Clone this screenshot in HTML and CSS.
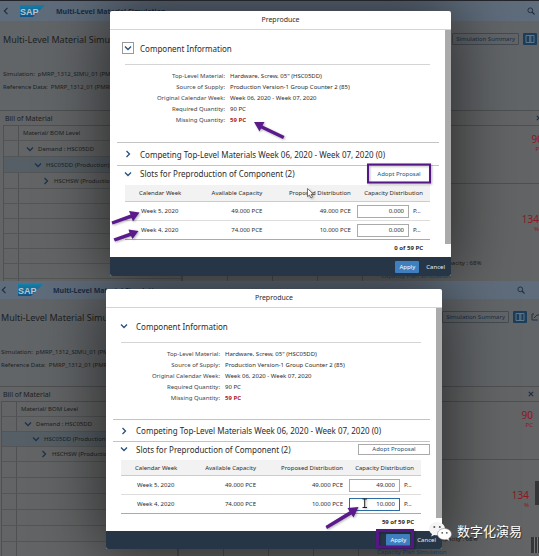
FILE: index.html
```html
<!DOCTYPE html>
<html lang="en">
<head>
  <meta charset="UTF-8" />
  <meta name="viewport" content="width=device-width, initial-scale=1" />
  <title>Preproduce - Multi-Level Material Simulation</title>
  <link rel="stylesheet" href="styles.css">
</head>
<body>
  <!-- Shared icons -->
  <svg class="sprite" aria-hidden="true">
    <linearGradient id="sapFill" x2="0" y2="1"><stop offset="0" stop-color="#147fa8"/><stop offset="1" stop-color="#125385"/></linearGradient>
    <symbol id="down" viewBox="0 0 8 8"><path d="M1 2.5 4 5.5 7 2.5" fill="none" stroke="currentColor" stroke-width="1.3"/></symbol>
    <symbol id="right" viewBox="0 0 8 8"><path d="M2.5 1 5.5 4 2.5 7" fill="none" stroke="currentColor" stroke-width="1.3"/></symbol>
    <symbol id="left" viewBox="0 0 8 8"><path d="M5.5 .8 2.3 4 5.5 7.2" fill="none" stroke="currentColor" stroke-width="1.1"/></symbol>
    <symbol id="search" viewBox="0 0 8 8"><circle cx="3.3" cy="3.3" r="2.4" fill="none" stroke="currentColor" stroke-width=".9"/><path d="M5 5 7.5 7.5" stroke="currentColor" stroke-width="1.1"/></symbol>
    <symbol id="close" viewBox="0 0 8 8"><path d="M1.8 1.8 6.2 6.2M6.2 1.8 1.8 6.2" stroke="currentColor" stroke-width="1.1"/></symbol>
    <symbol id="columns" viewBox="0 0 10 8"><path d="M1 .5h8v7H1z" fill="none" stroke="currentColor" stroke-width=".8"/><path d="M4 .5h2.500v7H4z" fill="currentColor" opacity=".6"/></symbol>
    <symbol id="share" viewBox="0 0 8 8"><path d="M3 1H1v6h6M3 5l3-3h2" fill="none" stroke="currentColor" stroke-width=".9"/></symbol>
  </svg>

  <section class="screen">
    <header class="shell">
      <button class="icon-btn" aria-label="Back"><svg class="icon"><use href="#left"/></svg></button>
      <svg class="logo" viewBox="0 0 25 12" role="img" aria-label="SAP"><path d="M0 0H25L13 12H0z" fill="url(#sapFill)"/><text x="0" y="9.500">SAP</text></svg>
      <span class="shell-title">Multi-Level Material Simulation <i class="caret"></i></span>
      <button class="icon-btn search" aria-label="Search"><svg class="icon"><use href="#search"/></svg></button>
    </header>
    <div class="page-head">
      <div class="title-row">
        <h1>Multi-Level Material Simulation</h1>
        <button class="summary">Simulation Summary</button>
        <button class="layout" aria-label="Layout"><svg><use href="#columns"/></svg></button>
      </div>
      <p>Simulation: &nbsp;pMRP_1312_SIMU_01 (PMRP)</p>
      <p>Reference Data: &nbsp;PMRP_1312_01 (PMRP)</p>
    </div>
    <div class="bom-bar">
      <h2>Bill of Material</h2>
      <button class="icon-btn" aria-label="Close"><svg class="icon"><use href="#close"/></svg></button>
    </div>
    <div class="workspace">
      <div class="tree">
        <div class="tree-row head">Material/ BOM Level</div>
        <div class="tree-row level1"><svg class="icon"><use href="#down"/></svg>Demand : HSC05DD</div>
        <div class="tree-row level2 selected"><svg class="icon"><use href="#down"/></svg>HSC05DD (Production)</div>
        <div class="tree-row level3"><svg class="icon"><use href="#right"/></svg>HSCHSW (Production)</div>
        <div class="tree-row"></div>
        <div class="tree-row"></div>
        <div class="tree-row"></div>
        <div class="tree-row"></div>
        <div class="tree-row"></div>
        <div class="tree-row"></div>
      </div>
      <div class="board">
        <div class="kpi first"><strong>90</strong><small>PC</small></div>
        <div class="kpi second"><strong>134</strong><small>%</small></div>
        <p class="capacity">Capacity : 68%</p>
        <a class="plan" href="#">Capacity Plan Simulation</a>
      </div>
    </div>

    <div class="dialog" role="dialog" aria-labelledby="title1">
      <h2 class="dialog-title" id="title1">Preproduce</h2>
      <div class="dialog-body">
        <div class="content">
          <h3 class="info-head"><button class="toggle focused" aria-label="Collapse component information"><svg class="icon"><use href="#down"/></svg></button>Component Information</h3>
          <dl class="fields">
            <dt>Top-Level Material:</dt><dd>Hardware, Screw, 05" (HSC05DD)</dd>
            <dt>Source of Supply:</dt><dd>Production Version-1 Group Counter 2 (85)</dd>
            <dt>Original Calendar Week:</dt><dd>Week 06, 2020 - Week 07, 2020</dd>
            <dt>Required Quantity:</dt><dd>90 PC</dd>
            <dt>Missing Quantity:</dt><dd class="missing">59 PC</dd>
          </dl>
          <h3 class="competing"><button class="toggle" aria-label="Expand competing materials"><svg class="icon"><use href="#right"/></svg></button>Competing Top-Level Materials Week 06, 2020 - Week 07, 2020 (0)</h3>
          <div class="slots-head">
            <h3><button class="toggle" aria-label="Collapse slots"><svg class="icon"><use href="#down"/></svg></button>Slots for Preproduction of Component (2)</h3>
            <button class="adopt marked">Adopt Proposal</button>
          </div>
          <table class="slots">
            <thead>
              <tr><th>Calendar Week</th><th>Available Capacity</th><th>Proposed Distribution</th><th>Capacity Distribution</th></tr>
            </thead>
            <tbody>
              <tr><td>Week 5, 2020</td><td>49.000 PCE</td><td>49.000 PCE</td><td><label><input type="text" value="0.000" aria-label="Week 5 distribution"><span>P...</span></label></td></tr>
              <tr><td>Week 4, 2020</td><td>74.000 PCE</td><td>10.000 PCE</td><td><label><input type="text" value="0.000" aria-label="Week 4 distribution"><span>P...</span></label></td></tr>
            </tbody>
          </table>
          <p class="total">0 of 59 PC</p>
        </div>
        <div class="scrollbar"></div>
      </div>
      <footer class="dialog-foot">
        <button class="apply">Apply</button>
        <button class="cancel">Cancel</button>
      </footer>
    </div>
  </section>

  <section class="screen compact">
    <header class="shell">
      <button class="icon-btn" aria-label="Back"><svg class="icon"><use href="#left"/></svg></button>
      <svg class="logo" viewBox="0 0 25 12" role="img" aria-label="SAP"><path d="M0 0H25L13 12H0z" fill="url(#sapFill)"/><text x="0" y="9.500">SAP</text></svg>
      <span class="shell-title">Multi-Level Material Simulation <i class="caret"></i></span>
      <button class="icon-btn search" aria-label="Search"><svg class="icon"><use href="#search"/></svg></button>
    </header>
    <div class="page-head">
      <div class="title-row">
        <h1>Multi-Level Material Simulation</h1>
        <button class="summary">Simulation Summary</button>
        <button class="layout" aria-label="Layout"><svg><use href="#columns"/></svg></button>
        <button class="icon-btn share" aria-label="Share"><svg class="icon"><use href="#share"/></svg></button>
      </div>
      <p>Simulation: &nbsp;pMRP_1312_SIMU_01 (PMRP)</p>
      <p>Reference Data: &nbsp;PMRP_1312_01 (PMRP)</p>
    </div>
    <div class="bom-bar">
      <h2>Bill of Material</h2>
      <button class="icon-btn" aria-label="Close"><svg class="icon"><use href="#close"/></svg></button>
    </div>
    <div class="workspace">
      <div class="tree">
        <div class="tree-row head">Material/ BOM Level</div>
        <div class="tree-row level1"><svg class="icon"><use href="#down"/></svg>Demand : HSC05DD</div>
        <div class="tree-row level2 selected"><svg class="icon"><use href="#down"/></svg>HSC05DD (Production)</div>
        <div class="tree-row level3"><svg class="icon"><use href="#right"/></svg>HSCHSW (Production)</div>
        <div class="tree-row"></div>
        <div class="tree-row"></div>
        <div class="tree-row"></div>
        <div class="tree-row"></div>
        <div class="tree-row"></div>
        <div class="tree-row"></div>
      </div>
      <div class="board">
        <div class="kpi first"><strong>90</strong><small>PC</small></div>
        <div class="kpi second"><strong>134</strong><small>%</small></div>
        <p class="capacity">Capacity : 68%</p>
        <a class="plan" href="#">Capacity Plan Simulation</a>
      </div>
    </div>
    <div class="side-handle"></div>
    <div class="pause"></div>

    <div class="dialog" role="dialog" aria-labelledby="title2">
      <h2 class="dialog-title" id="title2">Preproduce</h2>
      <div class="dialog-body">
        <div class="content">
          <h3 class="info-head"><button class="toggle" aria-label="Collapse component information"><svg class="icon"><use href="#down"/></svg></button>Component Information</h3>
          <dl class="fields">
            <dt>Top-Level Material:</dt><dd>Hardware, Screw, 05" (HSC05DD)</dd>
            <dt>Source of Supply:</dt><dd>Production Version-1 Group Counter 2 (85)</dd>
            <dt>Original Calendar Week:</dt><dd>Week 06, 2020 - Week 07, 2020</dd>
            <dt>Required Quantity:</dt><dd>90 PC</dd>
            <dt>Missing Quantity:</dt><dd class="missing">59 PC</dd>
          </dl>
          <h3 class="competing"><button class="toggle" aria-label="Expand competing materials"><svg class="icon"><use href="#right"/></svg></button>Competing Top-Level Materials Week 06, 2020 - Week 07, 2020 (0)</h3>
          <div class="slots-head">
            <h3><button class="toggle" aria-label="Collapse slots"><svg class="icon"><use href="#down"/></svg></button>Slots for Preproduction of Component (2)</h3>
            <button class="adopt">Adopt Proposal</button>
          </div>
          <table class="slots">
            <thead>
              <tr><th>Calendar Week</th><th>Available Capacity</th><th>Proposed Distribution</th><th>Capacity Distribution</th></tr>
            </thead>
            <tbody>
              <tr><td>Week 5, 2020</td><td>49.000 PCE</td><td>49.000 PCE</td><td><label><input type="text" value="49.000" aria-label="Week 5 distribution"><span>P...</span></label></td></tr>
              <tr><td>Week 4, 2020</td><td>74.000 PCE</td><td>10.000 PCE</td><td><label><input class="active" type="text" value="10.000" aria-label="Week 4 distribution"><span>P...</span></label></td></tr>
            </tbody>
          </table>
          <p class="total">59 of 59 PC</p>
        </div>
        <div class="scrollbar"></div>
      </div>
      <footer class="dialog-foot">
        <button class="apply">Apply</button>
        <button class="cancel">Cancel</button>
      </footer>
    </div>
  </section>

  <!-- Arrows, frames and pointers drawn over both screens -->
  <svg class="marks" width="539" height="556" viewBox="0 0 539 556" aria-hidden="true">
    <g fill="#5b1a8b">
      <path d="M254 122 264.5 122 262.5 125.5 284.5 136 283 139 261 128.5 259.5 131.5z"/>
      <path d="M139.500 212.500 129 211 130.500 214.500 111.500 221.500 112.500 224.500 131.500 218 133 221.500z"/>
      <path d="M138.500 231 128.500 229.500 129.500 232.700 113.500 238.500 115 241.500 131 236 132.500 239z"/>
      <path d="M358.500 507 347.500 508 349.500 511.200 325.500 526 327 529 351.500 514.500 353.500 517.500z"/>
    </g>
    <g fill="none" stroke="#551785" stroke-width="2">
      <path d="M368 164.500H430V182.500H368z"/>
      <path d="M377.500 530.500H412.500V547H377.500z" stroke-width="3"/>
    </g>
    <path d="M307.500 188.500v8l2-1.500 1.500 3 1.500-1-1.500-2.700h2.500z" fill="#fff" stroke="#444" stroke-width=".7"/>
    <path d="M362.500 499h4.500M362.500 507.500h4.500M364.700 499v8.500" stroke="#222" stroke-width="1"/>
  </svg>

  <div class="watermark">
    <svg viewBox="0 0 23 19" aria-hidden="true">
      <path d="M8 0C3.500 0 0 3 0 6.700c0 2.200 1.200 4 3 5.200l-.8 2.600 3-1.600c.9.300 1.800.4 2.800.4 4.500 0 8-3 8-6.600S12.500 0 8 0z" fill="#f4f4f4"/>
      <circle cx="5.300" cy="5" r="1" fill="#555"/><circle cx="10.800" cy="5" r="1" fill="#555"/>
      <path d="M15.500 6.500c-3.900 0-7 2.500-7 5.600s3.100 5.600 7 5.600c.8 0 1.600-.1 2.300-.3l2.500 1.300-.6-2.200c1.800-1 2.800-2.600 2.800-4.400 0-3.100-3.100-5.600-7-5.600z" fill="#fff" stroke="#777" stroke-width=".5"/>
      <circle cx="13.200" cy="10.800" r=".9" fill="#555"/><circle cx="17.800" cy="10.800" r=".9" fill="#555"/>
    </svg>
    <span lang="zh">数字化演易</span>
  </div>
</body>
</html>
```
FILE: styles.css
```css
* {
  box-sizing: border-box;
}

body {
  margin: 0;
  position: relative;
  background: #4c4e50;
  font-family: "Noto Sans", "Open Sans", sans-serif;
  font-size: 6px;
  color: #2c2c2c;
}

h1, h2, h3, p, dl, dd {
  margin: 0;
  font-weight: 400;
}

button, input {
  font: inherit;
  color: inherit;
  padding: 0;
  margin: 0;
}

button {
  border: none;
  background: none;
  cursor: pointer;
}

.sprite {
  position: absolute;
  width: 0;
  height: 0;
}

.icon {
  display: block;
  flex: none;
  width: 8px;
  height: 8px;
}

.icon-btn {
  color: #1c2d42;
}

/* Background application */
.screen {
  position: relative;
  overflow: hidden;
  height: 281px;
  background: #636465;
  color: #1c1f22;
  border-top: 1px solid #22242a;
}

.shell {
  display: flex;
  align-items: center;
  height: 20px;
  padding: 0 4px 0 2px;
  background: #5f6c7b;
}

.logo {
  width: 25px;
  height: 12px;
  margin: 0 11px 0 10px;
}

.logo text {
  fill: #bcc4ca;
  font-family: "Liberation Sans", sans-serif;
  font-size: 9px;
  font-weight: 700;
}

.shell-title {
  flex: 1;
  font-size: 7px;
  font-weight: 700;
  color: #182c44;
}

.caret {
  display: inline-block;
  margin-left: 2px;
  border: 2px solid transparent;
  border-top-color: #182c44;
  border-bottom: none;
  vertical-align: middle;
}

.page-head {
  height: 89px;
  padding: 9px 2px 0 3px;
  background: #626568;
}

.title-row {
  display: flex;
  align-items: center;
  height: 18px;
  gap: 4px;
  margin-bottom: 20px;
}

.title-row h1 {
  flex: 1;
  font-size: 9px;
}

.summary {
  height: 12px;
  padding: 0 3px;
  border: 1px solid #444b52;
  border-radius: 1px;
  color: #1c2d42;
}

.layout {
  display: flex;
  align-items: center;
  justify-content: center;
  width: 14px;
  height: 12px;
  border-radius: 1px;
  background: #1c3e5a;
  color: #718391;
}

.layout svg {
  width: 10px;
  height: 8px;
}

.page-head p {
  line-height: 13px;
}

.bom-bar {
  display: flex;
  align-items: center;
  justify-content: space-between;
  height: 15px;
  padding-left: 5px;
  border-top: 1px solid #4e5051;
}

.bom-bar h2 {
  font-size: 7px;
}

.bom-bar .icon-btn {
  margin-right: -4px;
}

.workspace {
  display: flex;
  padding-left: 3px;
}

.tree {
  flex: none;
  width: 180px;
  border: 1px solid #4e5051;
  border-right-width: 2px;
  background: linear-gradient(90deg, transparent 14px, #4e5051 14px, #4e5051 15px, transparent 15px);
}

.tree-row {
  display: flex;
  align-items: center;
  gap: 4px;
  height: 16px;
  padding-left: 19px;
  border-bottom: 1px solid #545556;
}

.tree-row.head,
.tree-row:nth-child(n+5) {
  height: 15px;
}

.tree-row .icon {
  color: #1c344e;
}

.tree-row.level1 {
  padding-left: 22px;
}

.tree-row.level2 {
  padding-left: 30px;
}

.tree-row.level3 {
  padding-left: 38px;
}

.tree-row.selected {
  background: #565f66;
}

.board {
  flex: 1;
  border-top: 1px solid #4e5051;
  background: repeating-linear-gradient(90deg, transparent 0 44px, #4e5051 44px 45px) 0 130px / 190px 40px no-repeat;
}

.kpi {
  display: flex;
  flex-direction: column;
  align-items: flex-end;
  color: #8c1822;
}

.kpi strong {
  font-size: 10px;
  font-weight: 400;
  line-height: 12px;
}

.kpi small {
  font-size: 6px;
  line-height: 8px;
}

.first {
  height: 58px;
  padding-top: 7px;
  margin-right: -4px;
  border-bottom: 1px solid #4e5051;
}

.second {
  height: 74px;
  padding-top: 29px;
}

.capacity {
  padding-left: 258px;
  line-height: 10px;
}

.plan {
  display: block;
  padding-left: 198px;
  line-height: 16px;
  color: #134b78;
  text-decoration: none;
}

/* Dialog */
.dialog {
  position: absolute;
  top: 10px;
  left: 110px;
  right: 88px;
  border-radius: 2px;
  overflow: hidden;
  background: #fff;
  color: #2c2c2c;
  box-shadow: 0 0 64px 4px rgba(0, 0, 0, .6);
}

.dialog-title {
  height: 19px;
  line-height: 18px;
  border-bottom: 1px solid #d4d4d4;
  font-size: 7px;
  text-align: center;
}

.dialog-body {
  display: flex;
}

.content {
  flex: 1;
  padding: 0 6px 0 7px;
}

.scrollbar {
  width: 6px;
  margin-bottom: 13px;
  background: #aaa;
}

.dialog h3 {
  display: flex;
  align-items: center;
  gap: 6px;
  padding-left: 5px;
  font-size: 8px;
}

.toggle {
  display: flex;
  align-items: center;
  justify-content: center;
  width: 12px;
  height: 12px;
  color: #25507c;
}

.focused {
  border: 1px solid #999;
}

.dialog .info-head {
  height: 34px;
  margin: 0 9px 0 0;
  padding-top: 2px;
}

.fields {
  display: grid;
  grid-template-columns: 100px 1fr;
  column-gap: 5px;
  margin: 0 9px 0 8px;
  padding: 6px 0 16px;
  border-top: 1px solid #d4d4d4;
  line-height: 11px;
}

.fields dt {
  text-align: right;
  color: #444;
}

.fields .missing {
  color: #b31b26;
  font-weight: 700;
}

.dialog .competing {
  height: 24px;
  border-top: 1px solid #c4c4c4;
  border-bottom: 1px solid #c4c4c4;
}

.slots-head {
  display: flex;
  justify-content: space-between;
  height: 19px;
  padding-bottom: 4px;
}

.adopt {
  align-self: center;
  width: 72px;
  height: 11px;
  border: 1px solid #aaa;
  color: #25507c;
}

.marked {
  width: 62px;
  margin-right: 9px;
  border: none;
}

.slots {
  width: calc(100% - 17px);
  margin: 0 9px 0 8px;
  border-spacing: 0;
  table-layout: fixed;
}

.slots th {
  height: 17px;
  padding: 0;
  background: #f2f2f2;
  border-bottom: 1px solid #ccc;
  font-weight: 400;
  text-align: right;
  white-space: nowrap;
}

.slots td {
  height: 19px;
  padding: 0;
  border-bottom: 1px solid #ddd;
  text-align: right;
}

.slots th:nth-child(-n+3),
.slots td:nth-child(-n+3) {
  padding-right: 6px;
}

.slots th:nth-child(1),
.slots td:nth-child(1) {
  width: 22%;
  padding: 0 0 0 14px;
  text-align: left;
}

.slots td:nth-child(1) {
  padding-left: 16px;
}

.slots th:nth-child(2) {
  width: 25%;
}

.slots th:nth-child(3) {
  width: 29%;
}

.slots th:nth-child(4) {
  padding-right: 7px;
}

.slots tr:last-child td {
  border-bottom-color: #aaa;
}

.slots label {
  display: flex;
  align-items: center;
  gap: 4px;
  padding-right: 7px;
}

.slots input {
  flex: 1;
  min-width: 0;
  height: 13px;
  padding-right: 4px;
  border: 1px solid #aaa;
  background: #fff;
  text-align: right;
}

.slots .active {
  border-color: #2c6ea3;
}

.slots label span {
  width: 10px;
  text-align: left;
}

.total {
  height: 17px;
  padding-right: 16px;
  line-height: 16px;
  font-weight: 700;
  text-align: right;
}

.dialog-foot {
  display: flex;
  align-items: center;
  justify-content: flex-end;
  gap: 7px;
  height: 19px;
  padding-right: 6px;
  background: #263646;
  color: #e8edf2;
}

.apply {
  width: 24px;
  height: 12px;
  border-radius: 1px;
  background: #3f7fbf;
  color: #fff;
}

/* Second screen, slightly smaller */
.compact {
  height: 275px;
  border-top: none;
}

.compact .shell {
  height: 18px;
  padding: 0 14px 0 0;
}

.compact .logo {
  margin-right: 10px;
}

.compact .page-head {
  height: 87px;
  padding: 9px 0 0 1px;
}

.compact .share {
  width: 8px;
  overflow: hidden;
}

.compact .bom-bar {
  padding: 0 8px 0 3px;
}

.compact .workspace {
  padding-left: 1px;
}

.compact .tree {
  width: 178px;
}

.compact .tree-row {
  height: 15px;
}

.compact .tree-row:nth-child(n+5) {
  height: 16px;
}

.compact .kpi {
  padding-right: 10px;
}

.compact .dialog {
  top: 8px;
  left: 106px;
  right: 97px;
}

.compact .fields {
  grid-template-columns: 99px 1fr;
  padding-bottom: 15px;
}

.compact .competing {
  height: 23px;
}

.compact .slots-head {
  height: 18px;
}

.compact .slots th {
  height: 16px;
}

.compact .dialog-foot {
  height: 18px;
}

.side-handle {
  position: absolute;
  right: 0;
  top: 200px;
  width: 4px;
  height: 24px;
  background: #343638;
}

.pause {
  position: absolute;
  right: 0;
  bottom: 3px;
  width: 8px;
  height: 16px;
  border-left: 3px solid #343638;
  background: linear-gradient(90deg, #777 1px, #343638 1px 3px, #777 3px 4px, #343638 4px);
}

/* Overlays */
.marks {
  position: absolute;
  top: 0;
  left: 0;
  pointer-events: none;
  filter: drop-shadow(1px 1px 1px rgba(0, 0, 0, .3));
}

.watermark {
  position: absolute;
  right: 17px;
  bottom: 15px;
  display: flex;
  align-items: center;
  gap: 5px;
  color: #fff;
  font-family: "Noto Sans", "Noto Sans CJK SC", sans-serif;
  font-size: 13px;
  line-height: 20px;
  text-shadow: 1px 1px 1px rgba(0, 0, 0, .5);
}

.watermark svg {
  width: 23px;
  height: 19px;
}
```
